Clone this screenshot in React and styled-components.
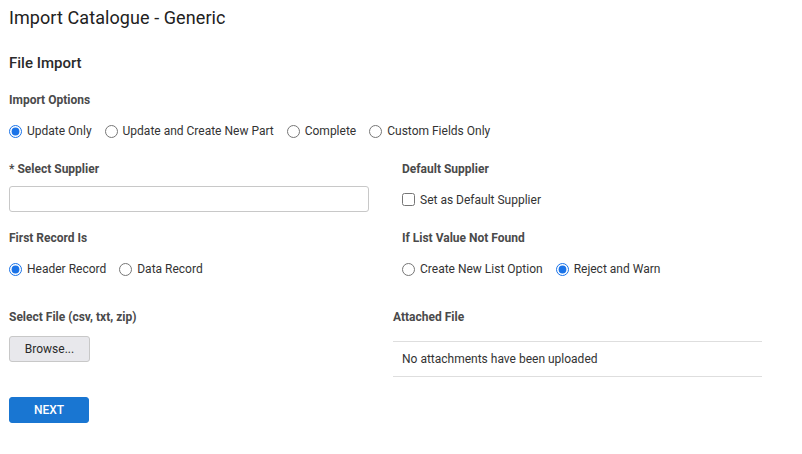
import React from 'react';
import styled, { createGlobalStyle } from 'styled-components';

// STYLES

const GlobalStyle = createGlobalStyle`
    body {
        margin: 0;
        background: #ffffff;
        font-family: Roboto, "Liberation Sans", Arial, sans-serif;
        color: #333333;
    }
`;

const Page = styled.div`
    padding: 6px 9px 20px;
    display: flex;
    flex-direction: column;
`;

const Title = styled.h1`
    margin: 0;
    font-size: 18px;
    line-height: 24px;
    font-weight: 400;
    letter-spacing: 0.08px;
    color: #212121;
`;

const SectionTitle = styled.h2`
    margin: 23px 0 0;
    font-size: 15px;
    line-height: 20px;
    font-weight: 500;
    color: #2a2a2a;
`;

const Label = styled.div`
    font-size: 12px;
    line-height: 16px;
    font-weight: 700;
    color: #4a4a4a;
`;

const OptionsBlock = styled.div`
    margin-top: 19px;
    display: flex;
    flex-direction: column;
    gap: 13px;
`;

const FieldRow = styled.div`
    display: grid;
    grid-template-columns: 360px 369px;
    column-gap: 24px;
    margin-top: ${(p) => p.$top}px;
`;

const Field = styled.div`
    display: flex;
    flex-direction: column;
    gap: ${(p) => p.$gap || 9}px;
    padding-left: ${(p) => (p.$inset ? 9 : 0)}px;
`;

const ChoiceGroup = styled.div`
    box-sizing: border-box;
    display: flex;
    align-items: center;
    gap: 13px;
    height: ${(p) => p.$height || 20}px;
    padding-top: ${(p) => p.$nudge || 0}px;
`;

const Choice = styled.label`
    display: flex;
    align-items: center;
    gap: 5px;
    font-size: 12px;
    color: #333333;
    cursor: pointer;

    input {
        margin: 0;
        width: 13px;
        height: 13px;
        accent-color: #1a73e8;
    }
`;

const TextInput = styled.input`
    box-sizing: border-box;
    width: 360px;
    height: 26px;
    border: 1px solid #c8c8c8;
    border-radius: 3px;
    padding: 0 8px;
    font-size: 12px;
    font-family: inherit;
    outline: none;
`;

const Button = styled.button`
    box-sizing: border-box;
    width: ${(p) => p.$width}px;
    height: 26px;
    border-radius: 3px;
    font-family: inherit;
    font-size: 12px;
    cursor: pointer;
    border: 1px solid ${(p) => (p.$primary ? '#1976d2' : '#c8c8c8')};
    background: ${(p) => (p.$primary ? '#1976d2' : '#e8e8ec')};
    color: ${(p) => (p.$primary ? '#ffffff' : '#2a2a2a')};
    font-weight: ${(p) => (p.$primary ? 500 : 400)};
    text-transform: ${(p) => (p.$primary ? 'uppercase' : 'none')};
`;

const AttachList = styled.div`
    box-sizing: border-box;
    height: 36px;
    margin-top: 7px;
    border-top: 1px solid #dedede;
    border-bottom: 1px solid #dedede;
    display: flex;
    align-items: center;
    padding-left: 9px;
    font-size: 12px;
    color: #333333;
`;

const Footer = styled.div`
    margin-top: 20px;
`;

// COMPONENT

const RadioSet = ({ name, options, value }) => (
    <ChoiceGroup>
        {options.map((opt) => (
            <Choice key={opt}>
                <input type="radio" name={name} defaultChecked={opt === value} />
                {opt}
            </Choice>
        ))}
    </ChoiceGroup>
);

export default function App() {
    return (
        <Page>
            <GlobalStyle />
            <Title>Import Catalogue - Generic</Title>
            <SectionTitle>File Import</SectionTitle>

            <OptionsBlock>
                <Label>Import Options</Label>
                <RadioSet
                    name="importOptions"
                    value="Update Only"
                    options={['Update Only', 'Update and Create New Part', 'Complete', 'Custom Fields Only']}
                />
            </OptionsBlock>

            <FieldRow $top={20}>
                <Field>
                    <Label>* Select Supplier</Label>
                    <TextInput type="text" />
                </Field>
                <Field $inset>
                    <Label>Default Supplier</Label>
                    <ChoiceGroup $height={26} $nudge={1}>
                        <Choice>
                            <input type="checkbox" />
                            Set as Default Supplier
                        </Choice>
                    </ChoiceGroup>
                </Field>
            </FieldRow>

            <FieldRow $top={18}>
                <Field $gap={13}>
                    <Label>First Record Is</Label>
                    <RadioSet name="firstRecord" value="Header Record" options={['Header Record', 'Data Record']} />
                </Field>
                <Field $inset $gap={13}>
                    <Label>If List Value Not Found</Label>
                    <RadioSet
                        name="listValue"
                        value="Reject and Warn"
                        options={['Create New List Option', 'Reject and Warn']}
                    />
                </Field>
            </FieldRow>

            <FieldRow $top={30}>
                <Field $gap={11}>
                    <Label>Select File (csv, txt, zip)</Label>
                    <div>
                        <Button $width={81}>Browse...</Button>
                    </div>
                </Field>
                <Field $gap={0}>
                    <Label>Attached File</Label>
                    <AttachList>No attachments have been uploaded</AttachList>
                </Field>
            </FieldRow>

            <Footer>
                <Button $primary $width={80}>Next</Button>
            </Footer>
        </Page>
    );
}
